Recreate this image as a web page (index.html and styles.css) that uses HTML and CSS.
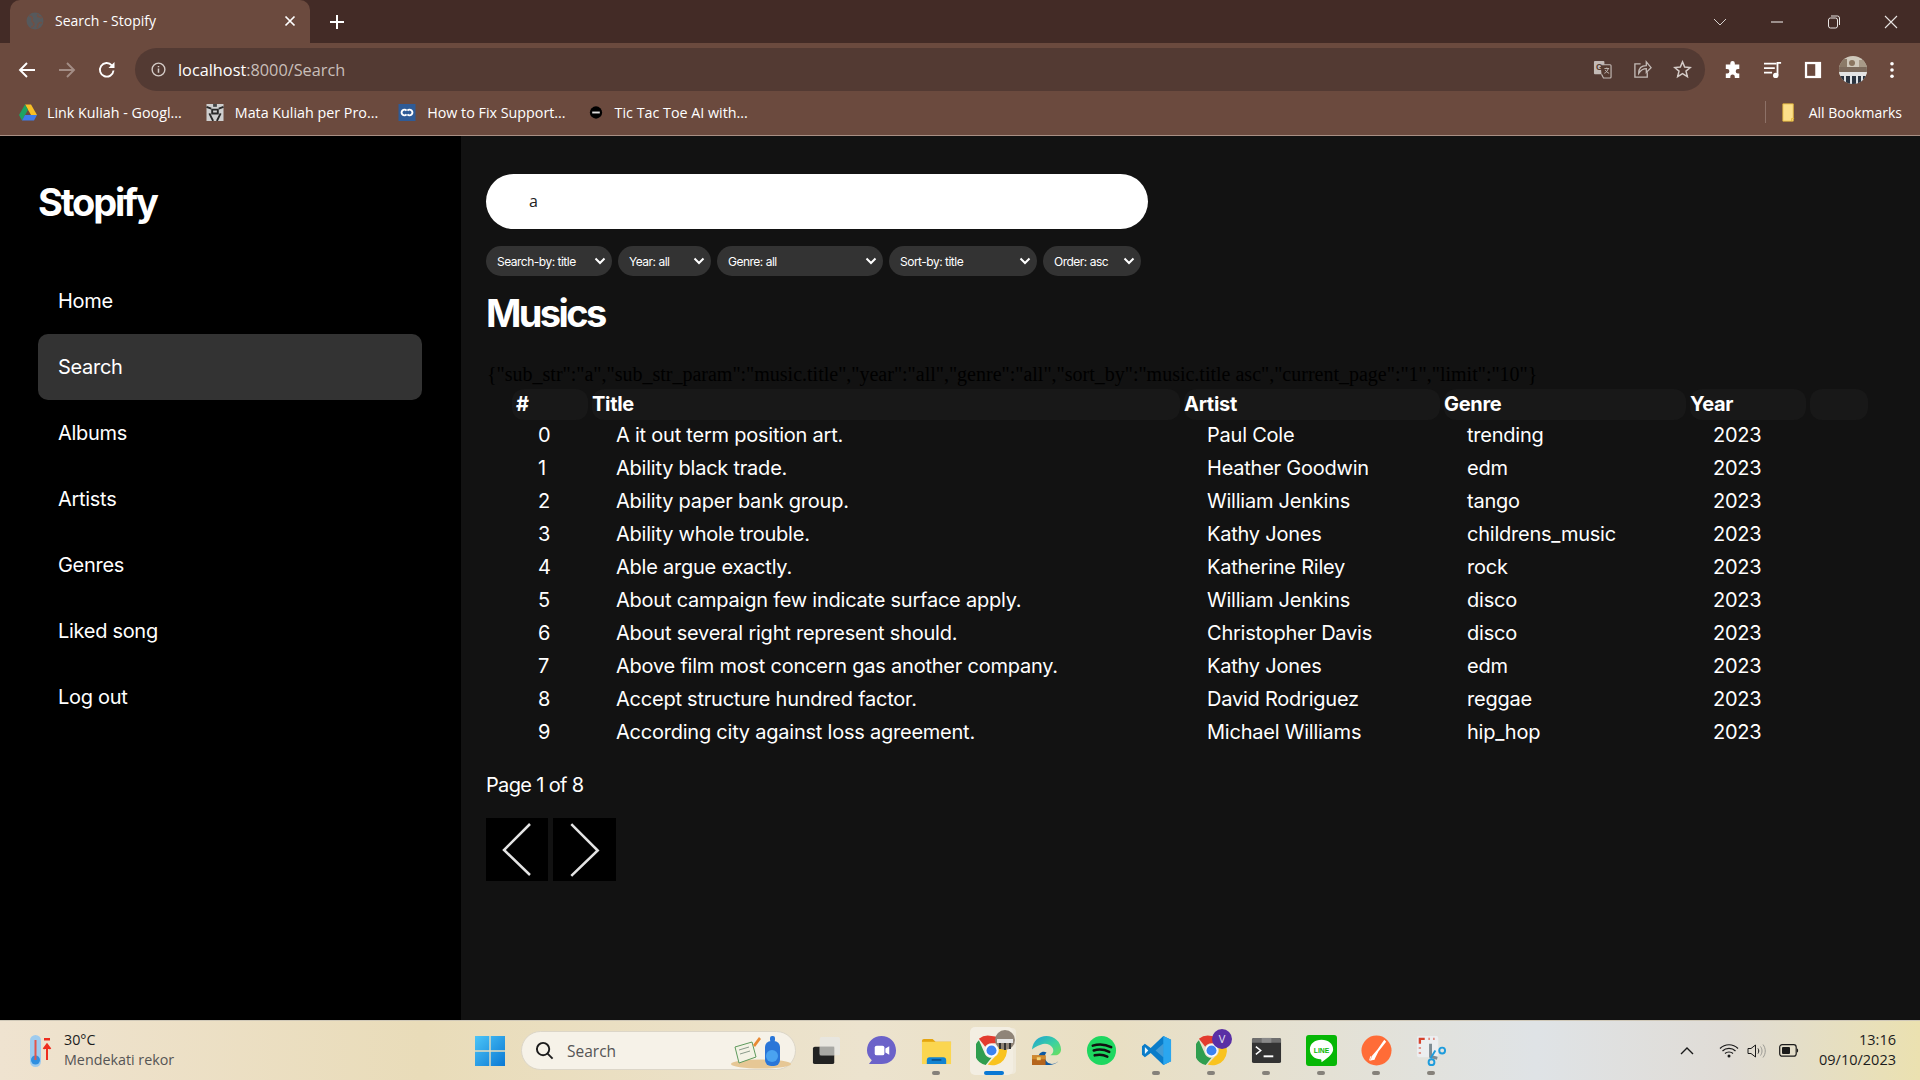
FILE: index.html
```html
<!DOCTYPE html>
<html lang="en">
<head>
  <meta charset="UTF-8" />
  <title>Search - Stopify</title>
  <link rel="stylesheet" href="styles.css">
</head>
<body>
  <svg class="defs" width="0" height="0">
    <symbol id="chrome" viewBox="0 0 32 32">
      <path d="M16 1a15 15 0 0 1 13 7.500H16a7.500 7.500 0 0 0-6.500 3.750L3 3.800A15 15 0 0 1 16 1z" fill="#e33b2e"/>
      <path d="M3 5.500 9.500 20A7.500 7.500 0 0 0 16 23.500L10 31A15 15 0 0 1 3 5.500z" fill="#2f9e4f"/>
      <path d="M29.700 8.500A15 15 0 0 1 12 30.500L19.500 22.500A7.500 7.500 0 0 0 22.500 12z" fill="#f9c31f"/>
      <circle cx="16" cy="16" r="6.500" fill="#fff"/>
      <circle cx="16" cy="16" r="5.200" fill="#3b82f0"/>
    </symbol>
  </svg>

  <header class="browser">
    <div class="tabstrip">
      <div class="tab">
        <svg class="favicon" viewBox="0 0 18 18"><circle cx="9" cy="9" r="8.500" fill="#56595c"/><path d="M3 4c3 0 4 2 3 4s2 2 2 4-2 3-3 3M12 2c-1 2 0 3 2 3l2 1M16 11c-2-1-4 0-4 2l-1 3" fill="none" stroke="#6f5045" stroke-width="1.600"/></svg>
        <span class="tab-title">Search - Stopify</span>
        <svg class="tab-close" viewBox="0 0 12 12"><path d="M1.500 1.500l9 9M10.500 1.500l-9 9" stroke="#fff" stroke-width="1.700"/></svg>
      </div>
      <svg class="new-tab" viewBox="0 0 16 16"><path d="M8 1v14M1 8h14" stroke="#fff" stroke-width="2"/></svg>
      <div class="window-btns">
        <svg viewBox="0 0 14 14"><path d="M1 4l6 6 6-6" fill="none" stroke="#d8d2cf" stroke-width="1"/></svg>
        <svg viewBox="0 0 14 14"><path d="M1 7h12" stroke="#e8e4e2" stroke-width="1.100"/></svg>
        <svg viewBox="0 0 14 14"><rect x="1.500" y="3" width="9" height="10" rx="2" fill="none" stroke="#e8e4e2"/><path d="M4 1h6.500a2 2 0 0 1 2 2v7" fill="none" stroke="#e8e4e2"/></svg>
        <svg viewBox="0 0 14 14"><path d="M1 1l12 12M13 1L1 13" stroke="#e8e4e2" stroke-width="1.100"/></svg>
      </div>
    </div>

    <div class="toolbar">
      <svg class="nav-btn" viewBox="0 0 18 18"><path d="M17 9H2M9 2L2 9l7 7" fill="none" stroke="#fff" stroke-width="1.900"/></svg>
      <svg class="nav-btn" viewBox="0 0 18 18"><path d="M1 9h15M9 2l7 7-7 7" fill="none" stroke="#a38d85" stroke-width="1.900"/></svg>
      <svg class="nav-btn" viewBox="0 0 18 18"><path d="M15.500 9.500a6.800 6.800 0 1 1-1.700-5.200" fill="none" stroke="#fff" stroke-width="1.900"/><path d="M16.500 1v6h-6z" fill="#fff"/></svg>
      <div class="omnibox">
        <svg class="info" viewBox="0 0 16 16"><circle cx="8" cy="8" r="6.800" fill="none" stroke="#d4cbc7" stroke-width="1.500"/><path d="M8 7v4.500M8 4.200v1.500" stroke="#d4cbc7" stroke-width="1.600"/></svg>
        <span class="url"><b>localhost</b>:8000/Search</span>
        <span class="omni-icons">
          <svg viewBox="0 0 20 20"><rect x="1" y="1" width="11" height="14" rx="1" fill="#c3bab6"/><path d="M8 5h10a1 1 0 0 1 1 1v12a1 1 0 0 1-1 1h-7l-2-4" fill="#53392f" stroke="#c3bab6" stroke-width="1.200"/><text x="3.200" y="11" class="g-letter">G</text><path d="M12 9h5M14.500 8v1M16 9c-.5 2.500-2 4-4 5M13 10.500c.8 1.500 2 2.800 4 3.500" fill="none" stroke="#c3bab6"/></svg>
          <svg viewBox="0 0 20 20"><path d="M8 4H2v14h13v-5" fill="none" stroke="#c3bab6" stroke-width="1.400"/><path d="M6 14c0-5 3-8 8-8V2l5 6-5 5V9c-4 0-6 2-8 5z" fill="none" stroke="#c3bab6" stroke-width="1.400"/></svg>
          <svg viewBox="0 0 20 20"><path d="M10 2l2.300 5.400 5.900.5-4.500 3.800 1.400 5.800-5.100-3.100-5.100 3.100 1.400-5.800L1.800 7.900l5.900-.5z" fill="none" stroke="#d4cbc7" stroke-width="1.600"/></svg>
        </span>
      </div>
      <div class="tool-icons">
        <svg viewBox="0 0 20 20"><path d="M7 2.500a2.500 2.500 0 0 1 5 0V4h5v5h-1.500a2.500 2.500 0 0 0 0 5H17v5h-5v-1.500a2.500 2.500 0 0 0-5 0V19H2v-5h1.500a2.500 2.500 0 0 0 0-5H2V4h5z" fill="#fff"/></svg>
        <svg viewBox="0 0 20 20"><path d="M0 3h14M0 8h12M0 13h9" stroke="#fff" stroke-width="1.900"/><path d="M15 16V2h4" fill="none" stroke="#fff" stroke-width="2"/><circle cx="13" cy="16" r="3" fill="#fff"/></svg>
        <svg viewBox="0 0 20 20"><rect x="1" y="1" width="18" height="18" fill="#fff"/><rect x="3.500" y="3.500" width="9" height="13" fill="#6b4a3e"/></svg>
        <svg class="avatar" viewBox="0 0 28 28"><clipPath id="av"><circle cx="14" cy="14" r="14"/></clipPath><g clip-path="url(#av)"><rect width="28" height="28" fill="#cfc8bb"/><rect x="0" y="3" width="8" height="9" fill="#8b7a68"/><rect x="20" y="4" width="8" height="8" fill="#a89a88"/><rect y="11" width="28" height="5" fill="#7c6a5c"/><rect y="16" width="28" height="4" fill="#e4e4e4"/><rect y="20" width="28" height="8" fill="#2b3440"/><path d="M6 20v8M12 20v8M18 20v8M23 20v8" stroke="#dfe3e6" stroke-width="2"/><circle cx="13" cy="7" r="3" fill="#8a7560"/></g></svg>
        <svg class="menu-dots" viewBox="0 0 6 20"><circle cx="3" cy="3" r="2" fill="#fff"/><circle cx="3" cy="10" r="2" fill="#fff"/><circle cx="3" cy="17" r="2" fill="#fff"/></svg>
      </div>
    </div>

    <div class="bookmarks">
      <a class="bookmark bm-drive">
        <svg viewBox="0 0 18 16"><path d="M6 0h6l6 10.500h-6z" fill="#f8bf26"/><path d="M6 0l3 5.300L3 16 0 10.500z" fill="#1ea362"/><path d="M3 16l3-5.500h12L15 16z" fill="#3f7cec"/></svg>
        Link Kuliah - Googl...
      </a>
      <a class="bookmark bm-mata">
        <svg viewBox="0 0 18 18"><rect width="18" height="18" fill="#cfcfcf"/><path d="M0 3l5 2M18 3l-5 2M3 10l4 8M15 10l-4 8M6 6h6v4H6z" stroke="#2a2a2a" stroke-width="2" fill="none"/><rect x="7" y="0" width="4" height="3" fill="#444"/></svg>
        Mata Kuliah per Pro...
      </a>
      <a class="bookmark bm-fix">
        <svg viewBox="0 0 18 18"><rect width="18" height="18" fill="#2f5b96"/><path d="M8.500 7a3 3 0 1 0 0 4M9.500 7a3 3 0 1 1 0 4" fill="none" stroke="#fff" stroke-width="2"/></svg>
        How to Fix Support...
      </a>
      <a class="bookmark bm-tic">
        <svg viewBox="0 0 18 18"><circle cx="9" cy="9" r="6.500" fill="#000"/><rect x="5" y="8" width="8" height="2" fill="#ddd"/></svg>
        Tic Tac Toe AI with...
      </a>
      <div class="all-bookmarks">
        <svg viewBox="0 0 15 22"><path d="M1 1h12v20H1z" fill="#fde08a" stroke="#e6b93c"/><path d="M11 21v-3h3" fill="none" stroke="#e6b93c"/></svg>
        All Bookmarks
      </div>
    </div>
  </header>

  <div class="app">
    <aside class="sidebar">
      <h1 class="logo">Stopify</h1>
      <nav class="menu">
        <a class="menu-item">Home</a>
        <a class="menu-item active">Search</a>
        <a class="menu-item">Albums</a>
        <a class="menu-item">Artists</a>
        <a class="menu-item">Genres</a>
        <a class="menu-item">Liked song</a>
        <a class="menu-item">Log out</a>
      </nav>
    </aside>

    <main class="content">
      <input class="search" type="text" value="a" />
      <div class="filters">
        <select class="w-search"><option>Search-by: title</option></select>
        <select class="w-year"><option>Year: all</option></select>
        <select class="w-genre"><option>Genre: all</option></select>
        <select class="w-sort"><option>Sort-by: title</option></select>
        <select class="w-order"><option>Order: asc</option></select>
      </div>
      <h2 class="heading">Musics</h2>
      <div class="debug">{"sub_str":"a","sub_str_param":"music.title","year":"all","genre":"all","sort_by":"music.title asc","current_page":"1","limit":"10"}</div>

      <div class="table">
        <div class="thead">
          <div class="th num">#</div><div class="th">Title</div><div class="th">Artist</div><div class="th">Genre</div><div class="th">Year</div><div class="th"></div>
        </div>
        <div class="tr"><div class="td num">0</div><div class="td">A it out term position art.</div><div class="td">Paul Cole</div><div class="td">trending</div><div class="td">2023</div></div>
        <div class="tr"><div class="td num">1</div><div class="td">Ability black trade.</div><div class="td">Heather Goodwin</div><div class="td">edm</div><div class="td">2023</div></div>
        <div class="tr"><div class="td num">2</div><div class="td">Ability paper bank group.</div><div class="td">William Jenkins</div><div class="td">tango</div><div class="td">2023</div></div>
        <div class="tr"><div class="td num">3</div><div class="td">Ability whole trouble.</div><div class="td">Kathy Jones</div><div class="td">childrens_music</div><div class="td">2023</div></div>
        <div class="tr"><div class="td num">4</div><div class="td">Able argue exactly.</div><div class="td">Katherine Riley</div><div class="td">rock</div><div class="td">2023</div></div>
        <div class="tr"><div class="td num">5</div><div class="td">About campaign few indicate surface apply.</div><div class="td">William Jenkins</div><div class="td">disco</div><div class="td">2023</div></div>
        <div class="tr"><div class="td num">6</div><div class="td">About several right represent should.</div><div class="td">Christopher Davis</div><div class="td">disco</div><div class="td">2023</div></div>
        <div class="tr"><div class="td num">7</div><div class="td">Above film most concern gas another company.</div><div class="td">Kathy Jones</div><div class="td">edm</div><div class="td">2023</div></div>
        <div class="tr"><div class="td num">8</div><div class="td">Accept structure hundred factor.</div><div class="td">David Rodriguez</div><div class="td">reggae</div><div class="td">2023</div></div>
        <div class="tr"><div class="td num">9</div><div class="td">According city against loss agreement.</div><div class="td">Michael Williams</div><div class="td">hip_hop</div><div class="td">2023</div></div>
      </div>

      <p class="page-info">Page 1 of 8</p>
      <div class="pager">
        <button class="page-btn"><svg viewBox="0 0 62 63"><path d="M44 6L18 32l26 25" fill="none" stroke="#e4e4e4" stroke-width="2.500"/></svg></button>
        <button class="page-btn"><svg viewBox="0 0 62 63"><path d="M18 6l26 26-26 25" fill="none" stroke="#e4e4e4" stroke-width="2.500"/></svg></button>
      </div>
    </main>
  </div>

  <footer class="taskbar">
    <div class="weather">
      <svg viewBox="0 0 24 34"><rect x="2" y="1" width="11" height="32" rx="5.500" fill="#9ecbee"/><circle cx="7.500" cy="26" r="4.500" fill="#2f8fe0"/><rect x="6.500" y="6" width="2" height="20" fill="#e2554a"/><path d="M16 4h6v2.500h-6z" fill="#ee2d1f"/><path d="M19 26V13M15.500 15l3.500-4.500 3.500 4.500" fill="#ee2d1f" stroke="#ee2d1f" stroke-width="2"/></svg>
      <div class="weather-text"><span class="temp">30°C</span><span class="cond">Mendekati rekor</span></div>
    </div>

    <div class="task-center">
      <svg class="win-logo" viewBox="0 0 30 30"><defs><linearGradient id="winb" x1="0" y1="0" x2="1" y2="1"><stop offset="0" stop-color="#4cc5f7"/><stop offset="1" stop-color="#0a78d4"/></linearGradient></defs><path d="M0 0h14.300v14.300H0zM15.700 0H30v14.300H15.700zM0 15.700h14.300V30H0zM15.700 15.700H30V30H15.700z" fill="url(#winb)"/></svg>
      <div class="task-search">
        <svg class="mag" viewBox="0 0 20 20"><circle cx="8.500" cy="8.500" r="6.500" fill="none" stroke="#1c1c1c" stroke-width="2"/><path d="M13 13l5.500 5.500" stroke="#1c1c1c" stroke-width="2"/></svg>
        <span>Search</span>
        <svg class="search-art" viewBox="0 0 62 34"><ellipse cx="32" cy="29" rx="30" ry="4.500" fill="#e6c795"/><path d="M6 12l17-5 4 15-17 6z" fill="#f3f2e4" stroke="#5e9a5c"/><path d="M10 15l10-3M11 19l10-3" stroke="#8a9a8a"/><path d="M24 10l6-8 2 2-6 8z" fill="#e98a34"/><rect x="36" y="6" width="15" height="25" rx="6" fill="#2a76d8"/><rect x="41" y="1" width="5" height="6" rx="2" fill="#2a76d8"/><circle cx="43" cy="21" r="6" fill="#4aa3f0"/></svg>
      </div>
      <div class="apps">
        <span class="app-icon">
          <svg viewBox="0 0 32 32"><rect x="2" y="12" width="22" height="18" rx="2" fill="#222"/><rect x="9" y="2" width="21" height="19" rx="2" fill="#e8e6e2" opacity=".85"/><rect x="9" y="12" width="15" height="9" fill="#a8a8a4"/></svg>
        </span>
        <span class="app-icon">
          <svg viewBox="0 0 32 32"><path d="M16 1c8 0 15 6 15 15s-7 14-15 14H3l3-4C3 23 1 20 1 16 1 7 8 1 16 1z" fill="#6b62c9"/><rect x="9" y="11" width="10" height="10" rx="2" fill="#fff"/><path d="M20 14l4-2.500v9L20 18z" fill="#fff"/></svg>
        </span>
        <span class="app-icon dot">
          <svg viewBox="0 0 32 32"><path d="M1 6a2 2 0 0 1 2-2h9l3 3h16v3H1z" fill="#e5a50f"/><rect x="1" y="7" width="30" height="23" fill="#fbd650"/><path d="M6 26a3 3 0 0 1 3-3h14a3 3 0 0 1 3 3v4H6z" fill="#1183d1"/><rect x="11" y="25" width="10" height="1.500" fill="#084b83"/></svg>
        </span>
        <span class="app-icon current">
          <svg viewBox="0 0 32 32"><use href="#chrome" /></svg>
          <svg class="badge" viewBox="0 0 20 20"><circle cx="10" cy="10" r="10" fill="#8f8478"/><rect x="2" y="9" width="16" height="4" fill="#e6e6e6"/><path d="M5 13v6M10 13v7M15 13v6" stroke="#333" stroke-width="2"/></svg>
        </span>
        <span class="app-icon">
          <svg viewBox="0 0 32 32"><defs><linearGradient id="edge" x1="0" y1="0" x2="1" y2="1"><stop offset="0" stop-color="#1f9fd8"/><stop offset=".55" stop-color="#3ad1a0"/><stop offset="1" stop-color="#6fe05a"/></linearGradient></defs><path d="M1 15C2 6 8 1 16 1c8 0 15 6 15 14 0 4-3 6-6 6h-5c3-2 4-5 2-8-2-4-8-5-12-3-4 1.500-7 3-9 5z" fill="url(#edge)"/><path d="M15 31c-7 0-9-8-6-12 2-2 5-2 7-1-3 3-2 8 2 11 3 1.500 7 1 10-2-2 3-7 4-13 4z" fill="#0c59a4"/><path d="M1 21h14v10H1z" fill="#b5651d"/><path d="M1 21h14v4H1z" fill="#d08a2e"/><rect x="6" y="23" width="4" height="3" fill="#f6d67a"/></svg>
        </span>
        <span class="app-icon">
          <svg viewBox="0 0 32 32"><circle cx="16" cy="16" r="15" fill="#1ed760"/><path d="M7 11c6-2 13-1.500 19 1.500M8 16c5-1.500 11-1 16 1.500M9 21c4-1 9-.8 13 1.300" fill="none" stroke="#111" stroke-width="2.600" stroke-linecap="round"/></svg>
        </span>
        <span class="app-icon dot">
          <svg viewBox="0 0 32 32"><path d="M23 1l8 4v22l-8 4-13-12.500L4 23l-3-2.500V11.500L4 9l6 4.500z" fill="#0a7cc9"/><path d="M23 1l8 4v22l-8 4z" fill="#2aa6ef"/><path d="M23 9l-8 7 8 7z" fill="#eaf6fd" opacity=".25"/><path d="M4 12.500V19.500L7.500 16z" fill="#eaf6fd"/></svg>
        </span>
        <span class="app-icon dot">
          <svg viewBox="0 0 32 32"><use href="#chrome" /></svg>
          <span class="profile-v">V</span>
        </span>
        <span class="app-icon dot">
          <svg viewBox="0 0 32 32"><rect x="1" y="3" width="30" height="26" rx="2" fill="#333"/><path d="M1 5a2 2 0 0 1 2-2h26a2 2 0 0 1 2 2v3H1z" fill="#6e6e6e"/><rect x="11" y="3" width="10" height="5" fill="#8a8a8a"/><path d="M5 12l5 4-5 4" fill="none" stroke="#fff" stroke-width="1.600"/><rect x="13" y="21" width="10" height="2" fill="#fff"/></svg>
        </span>
        <span class="app-icon dot">
          <svg viewBox="0 0 32 32"><rect width="32" height="32" rx="3" y="0" fill="#06b706"/><path d="M16 5c7 0 12 4 12 10 0 5-7 10-12 13 0-2 0-3-1-3C9 25 4 21 4 15 4 9 9 5 16 5z" fill="#fff"/><text x="16" y="18.500" class="line-text">LINE</text></svg>
        </span>
        <span class="app-icon dot">
          <svg viewBox="0 0 32 32"><ellipse cx="16" cy="16" rx="15.500" ry="15.500" fill="#ff6c37"/><path d="M24 5l2 2-8 10-4 8-4 1 1-4 6-7z" fill="#fff"/><path d="M14 25l-5 1 1-4" fill="none" stroke="#fff"/></svg>
        </span>
        <span class="app-icon dot">
          <svg viewBox="0 0 32 32"><rect x="1" y="1" width="22" height="22" rx="2" fill="#eceef0"/><path d="M4 9V4h5M13 4h1M18 4h1M4 13v1M4 18v1" fill="none" stroke="#d6422c" stroke-width="2.400"/><path d="M15 9v13l7 2" fill="none" stroke="#7e8b92" stroke-width="3"/><path d="M20 16l-5 8" stroke="#1e9cdc" stroke-width="2"/><circle cx="27" cy="16" r="3" fill="none" stroke="#1e9cdc" stroke-width="2"/><circle cx="16" cy="28" r="3" fill="none" stroke="#1e9cdc" stroke-width="2"/></svg>
        </span>
      </div>
    </div>

    <div class="tray">
      <svg class="tray-up" viewBox="0 0 14 8"><path d="M1 7l6-6 6 6" fill="none" stroke="#1a1a1a" stroke-width="1.400"/></svg>
      <svg class="tray-wifi" viewBox="0 0 20 15"><path d="M1 5.500c5-5 13-5 18 0M3.500 8c3.500-3.500 9.500-3.500 13 0M6 10.500c2-2 6-2 8 0" fill="none" stroke="#1a1a1a" stroke-width="1.200"/><circle cx="10" cy="13" r="1.500" fill="#1a1a1a"/></svg>
      <svg class="tray-vol" viewBox="0 0 20 16"><path d="M1 5.500h3L8.500 2v12L4 10.500H1z" fill="none" stroke="#1a1a1a"/><path d="M11 5.500c1 1.500 1 3.500 0 5" fill="none" stroke="#1a1a1a"/><path d="M13.500 3.500c2 3 2 6 0 9M16 1.500c3 4 3 9 0 13" fill="none" stroke="#9b9a94"/></svg>
      <svg class="tray-bat" viewBox="0 0 20 13"><rect x=".7" y=".7" width="16.500" height="11.500" rx="2.500" fill="none" stroke="#1a1a1a" stroke-width="1.200"/><rect x="3" y="3" width="8" height="7" rx="1" fill="#1a1a1a"/><path d="M18 4.500c1.500 0 1.500 4 0 4z" fill="#1a1a1a"/></svg>
      <div class="clock"><span>13:16</span><span>09/10/2023</span></div>
    </div>
  </footer>
</body>
</html>
```

FILE: styles.css
```css
* {
  box-sizing: border-box;
}
html, body {
  margin: 0;
  height: 1080px;
  overflow: hidden;
}
body {
  display: flex;
  flex-direction: column;
  font-family: "Inter", "Noto Sans", sans-serif;
  background: #121212;
  color: #fff;
}
.defs {
  position: absolute;
}
svg {
  display: block;
  flex: none;
}

/* browser chrome */
.browser {
  height: 136px;
  flex: none;
  background: #6b4a3e;
  border-bottom: 1px solid #a98f84;
  font-family: "Open Sans", "Noto Sans", sans-serif;
}
.tabstrip {
  height: 43px;
  background: #432b26;
  display: flex;
  align-items: center;
  padding-left: 10px;
}
.tab {
  width: 300px;
  height: 43px;
  background: #6b4a3e;
  border-radius: 10px 10px 0 0;
  display: flex;
  align-items: center;
  padding: 0 14px 2px 16px;
  font-size: 14px;
}
.favicon {
  width: 18px;
  height: 18px;
}
.tab-title {
  margin-left: 11px;
  flex: 1;
}
.tab-close {
  width: 12px;
  height: 12px;
}
.new-tab {
  width: 16px;
  height: 16px;
  margin-left: 19px;
}
.window-btns {
  margin-left: auto;
  display: flex;
  gap: 43px;
  padding-right: 22px;
  align-items: center;
}
.window-btns svg {
  width: 14px;
  height: 14px;
}
.toolbar {
  height: 53px;
  display: flex;
  align-items: flex-start;
  padding: 5px 0 0 18px;
}
.nav-btn {
  width: 18px;
  height: 18px;
  margin: 13px 22px 0 0;
}
.omnibox {
  width: 1570px;
  height: 43px;
  margin-left: -3px;
  background: #533a33;
  border-radius: 22px;
  display: flex;
  align-items: center;
  padding: 0 16px;
}
.info {
  width: 15px;
  height: 15px;
}
.url {
  margin-left: 12px;
  font-size: 16.300px;
  color: #c9bfba;
}
.url b {
  font-weight: 400;
  color: #fff;
}
.omni-icons {
  margin-left: auto;
  display: flex;
  gap: 21px;
  margin-right: -3px;
}
.omni-icons svg {
  width: 19px;
  height: 19px;
}
.g-letter {
  font-family: "Liberation Sans", sans-serif;
  font-size: 9px;
  font-weight: 700;
  fill: #53392f;
}
.tool-icons {
  display: flex;
  align-items: center;
  gap: 22px;
  height: 43px;
  margin-left: 19px;
}
.tool-icons svg {
  width: 18px;
  height: 18px;
}
.tool-icons .avatar {
  width: 28px;
  height: 28px;
  margin-left: -5px;
  margin-right: 0;
}
.tool-icons .menu-dots {
  width: 6px;
}
.bookmarks {
  height: 39px;
  display: flex;
  align-items: center;
  font-size: 14.300px;
  padding: 0 0 7px 19px;
}
.bookmark {
  display: flex;
  align-items: center;
  gap: 10px;
  white-space: nowrap;
}
.bookmark svg {
  width: 18px;
  height: 17px;
}
.bm-mata {
  margin-left: 24px;
  gap: 11px;
}
.bm-fix {
  margin-left: 20px;
  gap: 11px;
}
.bm-tic {
  margin-left: 21px;
  gap: 10px;
}
.all-bookmarks {
  margin-left: auto;
  display: flex;
  align-items: center;
  gap: 13px;
  padding-left: 15px;
  padding-right: 18px;
  border-left: 1px solid #8d7167;
  height: 22px;
  font-size: 14px;
}
.all-bookmarks svg {
  width: 15px;
  height: 19px;
}

/* app */
.app {
  flex: 1;
  display: flex;
  min-height: 0;
}
.sidebar {
  width: 461px;
  background: #000;
  padding: 0 39px 0 38px;
}
.logo {
  margin: 41px 0 0 0;
  font-size: 38px;
  line-height: 50px;
  font-weight: 700;
  letter-spacing: -2.200px;
}
.menu {
  margin-top: 41px;
  display: flex;
  flex-direction: column;
}
.menu-item {
  height: 66px;
  line-height: 66px;
  padding-left: 20px;
  font-size: 20px;
  border-radius: 10px;
  letter-spacing: -0.3px;
}
.menu-item.active {
  background: #333;
}
.content {
  flex: 1;
  padding: 38px 0 0 25px;
  background: #121212;
}
.search {
  display: block;
  width: 662px;
  height: 55px;
  border: 0;
  border-radius: 28px;
  padding: 0 43px 2px;
  background: #fff;
  color: #222;
  font: 16px "Open Sans", sans-serif;
}
.filters {
  display: flex;
  gap: 6px;
  margin-top: 17px;
}
.filters select {
  appearance: none;
  height: 30px;
  border: 0;
  border-radius: 15px;
  padding: 0 11px;
  color: #fff;
  font-family: "Inter", sans-serif;
  font-size: 12px;
  letter-spacing: -0.5px;
  background: #333 url("data:image/svg+xml,%3Csvg xmlns='http://www.w3.org/2000/svg' viewBox='0 0 12 8'%3E%3Cpath d='M1.500 1.500L6 6l4.500-4.500' fill='none' stroke='white' stroke-width='2'/%3E%3C/svg%3E") no-repeat right 6px center / 12px 8px;
}
.w-search { width: 126px; }
.w-year { width: 93px; }
.w-genre { width: 166px; }
.w-sort { width: 148px; }
.w-order { width: 98px; }
.heading {
  margin: 13px 0 0;
  font-size: 38px;
  line-height: 48px;
  font-weight: 700;
  letter-spacing: -2.600px;
}
.debug {
  margin: 28px 0 0 1px;
  height: 18px;
  font: 20px/18px "Liberation Serif", serif;
  color: #000;
  white-space: nowrap;
}
.table {
  margin: 6px 0 0 26px;
  width: 1356px;
}
.thead, .tr {
  display: grid;
  grid-template-columns: 76px 588px 256px 242px 116px 58px;
  column-gap: 4px;
}
.thead {
  height: 29px;
  margin-bottom: 1px;
}
.th {
  background: #181818;
  border-radius: 12px;
  font-size: 20px;
  font-weight: 700;
  line-height: 31px;
  letter-spacing: -0.3px;
}
.th.num {
  padding-left: 4px;
}
.tr {
  height: 33px;
  line-height: 33px;
  font-size: 20px;
  letter-spacing: -0.23px;
}
.td {
  padding-left: 24px;
  white-space: nowrap;
}
.td:nth-child(n+3) {
  padding-left: 23px;
}
.td.num {
  padding-left: 26px;
}
.page-info {
  margin: 24px 0 0;
  font-size: 20px;
  line-height: 24px;
  letter-spacing: -0.65px;
}
.pager {
  display: flex;
  gap: 5px;
  margin-top: 21px;
}
.page-btn {
  width: 62px;
  height: 63px;
  padding: 0;
  border: 0;
  background: #000;
}
.page-btn:last-child {
  width: 63px;
}

/* windows taskbar */
.taskbar {
  height: 60px;
  flex: none;
  display: flex;
  align-items: center;
  color: #1c1c1c;
  border-top: 1px solid #cfc8b8;
  background: linear-gradient(90deg, #efe3d0 0%, #e9dcb9 22%, #ece3ce 45%, #e9dfc3 58%, #dfe3e6 80%, #e0dcd6 90%, #ebe1b0 100%);
  font-family: "Open Sans", "Noto Sans", sans-serif;
}
.weather {
  width: 475px;
  flex: none;
  display: flex;
  align-items: center;
  padding-left: 28px;
  gap: 12px;
}
.weather svg {
  width: 24px;
  height: 34px;
}
.weather-text {
  display: flex;
  flex-direction: column;
  font-size: 14.300px;
  line-height: 20px;
  margin-top: -1px;
}
.cond {
  color: #555;
}
.task-center {
  display: flex;
  align-items: center;
}
.win-logo {
  width: 30px;
  height: 30px;
}
.task-search {
  width: 275px;
  height: 39px;
  margin-left: 16px;
  border-radius: 20px;
  background: #f6f2e8;
  border: 1px solid #dcd6c8;
  display: flex;
  align-items: center;
  padding-left: 13px;
  font-size: 15.500px;
  color: #555;
  position: relative;
}
.mag {
  width: 19px;
  height: 19px;
  margin-right: 13px;
}
.search-art {
  position: absolute;
  right: 4px;
  bottom: 0;
  width: 62px;
  height: 34px;
}
.apps {
  display: flex;
  align-items: center;
  margin-left: 3px;
}
.app-icon {
  width: 55px;
  height: 58px;
  display: flex;
  align-items: center;
  justify-content: center;
  position: relative;
}
.app-icon svg {
  width: 31px;
  height: 31px;
}
.app-icon.dot::after {
  content: "";
  position: absolute;
  bottom: 5px;
  left: 23px;
  width: 8px;
  height: 4px;
  border-radius: 2px;
  background: #85817a;
}
.app-icon.current {
  background: #f3eee2;
  border-radius: 5px;
  box-shadow: 4px 0 0 -1px #efe9da;
  width: 43px;
  height: 48px;
  margin: 0 6px;
}
.app-icon.current::after {
  content: "";
  position: absolute;
  bottom: 0;
  left: 14px;
  width: 20px;
  height: 4px;
  border-radius: 2px;
  background: #0a78d4;
}
.app-icon .badge {
  position: absolute;
  top: 3px;
  right: -2px;
  width: 20px;
  height: 20px;
}
.profile-v {
  position: absolute;
  top: 7px;
  right: 7px;
  width: 20px;
  height: 20px;
  border-radius: 50%;
  background: #5a2fa5;
  color: #e5e0f3;
  font-size: 11px;
  line-height: 20px;
  text-align: center;
}
.line-text {
  font-family: "Liberation Sans", sans-serif;
  font-size: 7px;
  font-weight: 700;
  fill: #06b706;
  text-anchor: middle;
}
.tray {
  margin-left: auto;
  display: flex;
  align-items: center;
  padding-right: 24px;
}
.tray-up {
  width: 14px;
  height: 8px;
  margin-right: 25px;
}
.tray-wifi {
  width: 20px;
  height: 15px;
  margin-right: 8px;
}
.tray-vol {
  width: 20px;
  height: 16px;
  margin-right: 12px;
}
.tray-bat {
  width: 20px;
  height: 13px;
  margin-right: 20px;
}
.clock {
  display: flex;
  flex-direction: column;
  align-items: flex-end;
  font-size: 14.500px;
  line-height: 20px;
  margin-top: -1px;
}
```
